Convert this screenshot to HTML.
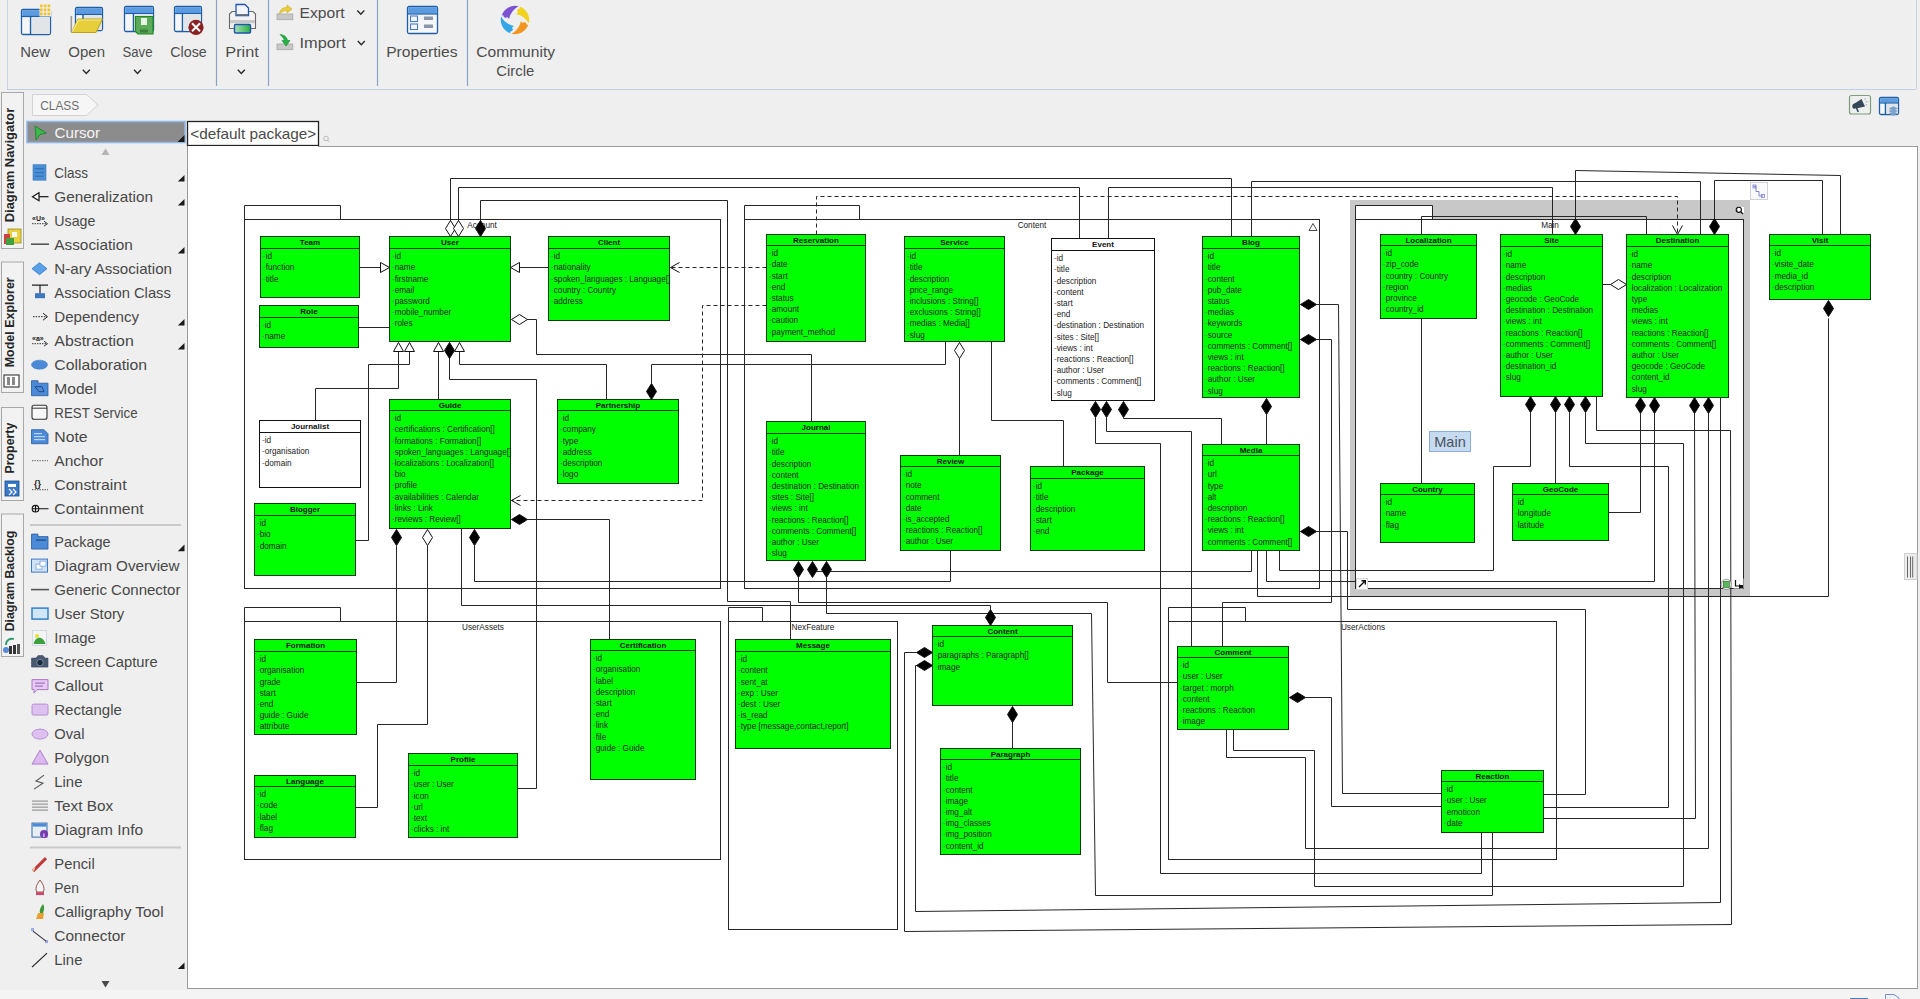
<!DOCTYPE html>
<html><head><meta charset="utf-8">
<style>
html,body{margin:0;padding:0;width:1920px;height:999px;overflow:hidden;background:#efefef;}
svg{display:block;position:absolute;left:0;top:0;}
svg text{font-family:"Liberation Sans",sans-serif;}
</style></head><body>
<svg width="1920" height="999" viewBox="0 0 1920 999">
<rect x="0" y="0" width="1920" height="999" fill="#efefef"/>
<line x1="7.5" y1="0" x2="7.5" y2="89" stroke="#c5d3e2"/>
<line x1="7" y1="89.5" x2="1916" y2="89.5" stroke="#b9d0e8"/>
<line x1="216.5" y1="0" x2="216.5" y2="86" stroke="#8aa4c6" stroke-width="1.2"/>
<line x1="268.5" y1="0" x2="268.5" y2="86" stroke="#8aa4c6" stroke-width="1.2"/>
<line x1="377.5" y1="0" x2="377.5" y2="86" stroke="#8aa4c6" stroke-width="1.2"/>
<line x1="467.5" y1="0" x2="467.5" y2="86" stroke="#8aa4c6" stroke-width="1.2"/>
<text x="20.3" y="56.7" textLength="29.7" font-size="14.5" fill="#4d4d4d" lengthAdjust="spacingAndGlyphs">New</text>
<text x="68.3" y="56.7" textLength="36.7" font-size="14.5" fill="#4d4d4d" lengthAdjust="spacingAndGlyphs">Open</text>
<text x="122.5" y="56.7" textLength="30" font-size="14.5" fill="#4d4d4d" lengthAdjust="spacingAndGlyphs">Save</text>
<text x="170.3" y="56.7" textLength="36.4" font-size="14.5" fill="#4d4d4d" lengthAdjust="spacingAndGlyphs">Close</text>
<text x="225.3" y="56.7" textLength="33.4" font-size="14.5" fill="#4d4d4d" lengthAdjust="spacingAndGlyphs">Print</text>
<text x="299.5" y="17.5" textLength="45.2" font-size="14.5" fill="#4d4d4d" lengthAdjust="spacingAndGlyphs">Export</text>
<text x="299.5" y="47.8" textLength="46.3" font-size="14.5" fill="#4d4d4d" lengthAdjust="spacingAndGlyphs">Import</text>
<text x="386.2" y="56.7" textLength="71.3" font-size="14.5" fill="#4d4d4d" lengthAdjust="spacingAndGlyphs">Properties</text>
<text x="476.3" y="56.7" textLength="78.7" font-size="14.5" fill="#4d4d4d" lengthAdjust="spacingAndGlyphs">Community</text>
<text x="496.3" y="75.8" textLength="37.9" font-size="14.5" fill="#4d4d4d" lengthAdjust="spacingAndGlyphs">Circle</text>
<path d="M82.8 69.7L86.3 73.5L89.8 69.7" fill="none" stroke="#2a2a2a" stroke-width="1.4"/>
<path d="M134.0 69.7L137.5 73.5L141.0 69.7" fill="none" stroke="#2a2a2a" stroke-width="1.4"/>
<path d="M237.8 69.7L241.3 73.5L244.8 69.7" fill="none" stroke="#2a2a2a" stroke-width="1.4"/>
<path d="M357.3 10.5L360.8 14.3L364.3 10.5" fill="none" stroke="#2a2a2a" stroke-width="1.4"/>
<path d="M357.8 41L361.3 44.8L364.8 41" fill="none" stroke="#2a2a2a" stroke-width="1.4"/>
<rect x="21.5" y="9.5" width="29" height="25" rx="1.5" fill="#f4f6f8" stroke="#1f5fa8" stroke-width="1.3"/><rect x="22.2" y="10.2" width="27.6" height="6" fill="#5b9be0"/><line x1="21" y1="16.5" x2="51" y2="16.5" stroke="#1f5fa8" stroke-width="1.2"/><line x1="30.6" y1="16.5" x2="30.6" y2="34" stroke="#1f5fa8" stroke-width="1.5"/><rect x="31.6" y="17.5" width="17.9" height="16.5" fill="#e2e5e8"/>
<rect x="39.5" y="4" width="11.5" height="12.5" fill="#efefef"/>
<rect x="40.0" y="4.5" width="2.6" height="2.8" fill="#f2c230"/>
<rect x="43.8" y="4.5" width="2.6" height="2.8" fill="#f2c230"/>
<rect x="47.6" y="4.5" width="2.6" height="2.8" fill="#f2c230"/>
<rect x="40.0" y="8.5" width="2.6" height="2.8" fill="#f2c230"/>
<rect x="43.8" y="8.5" width="2.6" height="2.8" fill="#f2c230"/>
<rect x="47.6" y="8.5" width="2.6" height="2.8" fill="#f2c230"/>
<rect x="40.0" y="12.5" width="2.6" height="2.8" fill="#f2c230"/>
<rect x="43.8" y="12.5" width="2.6" height="2.8" fill="#f2c230"/>
<rect x="47.6" y="12.5" width="2.6" height="2.8" fill="#f2c230"/>
<rect x="75.5" y="7.5" width="27" height="23" rx="1.5" fill="#f4f6f8" stroke="#1f5fa8" stroke-width="1.3"/><rect x="76.2" y="8.2" width="25.6" height="6" fill="#5b9be0"/><line x1="75" y1="14.5" x2="103" y2="14.5" stroke="#1f5fa8" stroke-width="1.2"/><line x1="83" y1="14.5" x2="83" y2="30" stroke="#1f5fa8" stroke-width="1.5"/><rect x="84" y="15.5" width="17.5" height="14.5" fill="#e2e5e8"/>
<path d="M71.5 32.5L78 19H102.5L96 32.5Z" fill="#e6cf3a" stroke="#b9a21a" stroke-width="1"/>
<path d="M72 32L78.5 20H101" fill="none" stroke="#f6ea8a" stroke-width="1.2"/>
<rect x="70.5" y="16" width="1.6" height="16" fill="#9a9a9a"/>
<rect x="124.5" y="6.5" width="29" height="25" rx="1.5" fill="#f4f6f8" stroke="#1f5fa8" stroke-width="1.3"/><rect x="125.2" y="7.2" width="27.6" height="6" fill="#5b9be0"/><line x1="124" y1="13.5" x2="154" y2="13.5" stroke="#1f5fa8" stroke-width="1.2"/><line x1="133.5" y1="13.5" x2="133.5" y2="31" stroke="#1f5fa8" stroke-width="1.5"/><rect x="134.5" y="14.5" width="18.0" height="16.5" fill="#e2e5e8"/>
<path d="M135.5 16.5H153V34H138L135.5 31.5Z" fill="#5bab5b" stroke="#1e8a1e" stroke-width="1.2"/>
<rect x="141" y="18" width="6" height="7" fill="#e8f4e8"/>
<rect x="140" y="29.5" width="8" height="3" fill="#3d7d3d"/>
<rect x="174.5" y="6.5" width="27" height="25" rx="1.5" fill="#f4f6f8" stroke="#1f5fa8" stroke-width="1.3"/><rect x="175.2" y="7.2" width="25.6" height="6" fill="#5b9be0"/><line x1="174" y1="13.5" x2="202" y2="13.5" stroke="#1f5fa8" stroke-width="1.2"/><line x1="182.5" y1="13.5" x2="182.5" y2="31" stroke="#1f5fa8" stroke-width="1.5"/><rect x="183.5" y="14.5" width="17.0" height="16.5" fill="#e2e5e8"/>
<circle cx="196" cy="27.3" r="7.6" fill="#8b2020"/>
<path d="M192 23.3L200 31.3M200 23.3L192 31.3" stroke="#fff" stroke-width="2"/>
<path d="M229.5 28.5V14L232 11.5H253L255.5 14V28.5Z" fill="#f2f2f2" stroke="#6a6a6a" stroke-width="1.1"/>
<rect x="230" y="20" width="25" height="3.2" fill="#c8c8c8"/>
<path d="M236 4.5H245L248.5 8V15.5H236Z" fill="#f4f4ff" stroke="#1f55b0" stroke-width="1.3"/>
<rect x="236.5" y="14" width="11.5" height="1.6" fill="#777"/>
<defs><linearGradient id="gpr" x1="0" x2="1"><stop offset="0" stop-color="#a8e0c0"/><stop offset="1" stop-color="#28b040"/></linearGradient></defs>
<rect x="234.5" y="24.5" width="16" height="8.5" rx="1" fill="url(#gpr)" stroke="#1f55b0" stroke-width="1.4"/>
<rect x="277" y="14" width="15.8" height="5.7" fill="#c8c8c8" stroke="#a8a8a8" stroke-width="0.8"/>
<path d="M279.5 14C280 9 283 7.5 287 7.5V5L292 9L287 13V10.5C284 10.5 281.5 11.5 279.5 14Z" fill="#e8cf3a" stroke="#c9aa20" stroke-width="0.6"/>
<rect x="277" y="44" width="15.8" height="5.7" fill="#c8c8c8" stroke="#a8a8a8" stroke-width="0.8"/>
<path d="M280 34.5C285 35 287 37.5 287.5 40.5H290L286 46L282 40.5H284.5C284 38.5 282.5 37 280 34.5Z" fill="#23b043" stroke="#148a2a" stroke-width="0.6"/>
<rect x="407.5" y="6.5" width="30" height="27" rx="1.5" fill="#f4f6f8" stroke="#1f5fa8" stroke-width="1.3"/><rect x="408.2" y="7.2" width="28.6" height="6.5" fill="#5b9be0"/><line x1="407" y1="14.0" x2="438" y2="14.0" stroke="#1f5fa8" stroke-width="1.2"/>
<rect x="410.5" y="16" width="7" height="5.5" fill="none" stroke="#4a7ac8" stroke-width="1.1"/>
<rect x="410.5" y="24" width="7" height="5.5" fill="none" stroke="#4a7ac8" stroke-width="1.1"/>
<rect x="424" y="16.5" width="9" height="3.5" fill="#8a97a8"/>
<rect x="424" y="24.5" width="9" height="3.5" fill="#8a97a8"/>
<g transform="translate(515,20)"><g fill="#7b52d4"><path d="M-13.2 -4.8A14 14 0 0 1 3.6 -13.8Q-4 -10 -6 -1Q-8 -5 -13.2 -4.8Z"/><circle cx="-9.3" cy="-4.6" r="2.3"/></g><g fill="#f2d21e" transform="rotate(90)"><path d="M-13.2 -4.8A14 14 0 0 1 3.6 -13.8Q-4 -10 -6 -1Q-8 -5 -13.2 -4.8Z"/><circle cx="-9.3" cy="-4.6" r="2.3"/></g><g fill="#f2941e" transform="rotate(180)"><path d="M-13.2 -4.8A14 14 0 0 1 3.6 -13.8Q-4 -10 -6 -1Q-8 -5 -13.2 -4.8Z"/><circle cx="-9.3" cy="-4.6" r="2.3"/></g><g fill="#35a6e6" transform="rotate(270)"><path d="M-13.2 -4.8A14 14 0 0 1 3.6 -13.8Q-4 -10 -6 -1Q-8 -5 -13.2 -4.8Z"/><circle cx="-9.3" cy="-4.6" r="2.3"/></g></g>
<path d="M32.5 94.5H86.5L98 105L86.5 115.5H32.5Z" fill="#f6f6f6" stroke="#d2d2d2"/>
<text x="40.3" y="110" font-size="13" textLength="38.9" lengthAdjust="spacingAndGlyphs" fill="#6e6e6e">CLASS</text>
<rect x="1849.5" y="95.5" width="21" height="18.5" rx="2" fill="#eef0ee" stroke="#7e9e7e" stroke-width="1.2"/>
<path d="M1853 104.5L1861.5 99L1865 106.5L1856 108.5Z" fill="#34485a"/><ellipse cx="1854.3" cy="106.2" rx="2" ry="2.6" fill="#34485a"/><path d="M1856.5 108L1858.3 112" stroke="#34485a" stroke-width="1.6"/>
<path d="M1864.5 99.5L1866 98.5M1865.5 102L1867.5 101.5M1865.5 104.5L1867 105" stroke="#7a8a9a" stroke-width="0.7"/>
<rect x="1879.5" y="97.5" width="19" height="17" rx="1.5" fill="#f4f6f8" stroke="#1f5fa8" stroke-width="1.3"/><rect x="1880.2" y="98.2" width="17.6" height="4.5" fill="#5b9be0"/><line x1="1879" y1="103.0" x2="1899" y2="103.0" stroke="#1f5fa8" stroke-width="1.2"/><line x1="1885.5" y1="103.0" x2="1885.5" y2="114" stroke="#1f5fa8" stroke-width="1.5"/><rect x="1886.5" y="104.0" width="11.0" height="10.0" fill="#e2e5e8"/>
<path d="M1889 108.5L1893.5 106.5L1897.5 108.5L1893 110.5Z M1889 111L1893.5 109L1897.5 111L1893 113Z M1889 113.5L1893.5 111.5L1897.5 113.5L1893 115.5Z" fill="#6aa0d8" stroke="#9aa8b8" stroke-width="0.5"/>
<line x1="1916.5" y1="0" x2="1916.5" y2="89" stroke="#c5d3e2"/>
<rect x="1.5" y="92.5" width="22" height="156.0" fill="#f2f2f2" stroke="#a8a8a8"/>
<text transform="translate(13.6,222.2) rotate(-90)" font-size="12.5" font-weight="bold" fill="#262626" textLength="114.4" lengthAdjust="spacingAndGlyphs">Diagram Navigator</text>
<rect x="1.5" y="262" width="22" height="130.5" fill="#f2f2f2" stroke="#a8a8a8"/>
<text transform="translate(13.6,367.3) rotate(-90)" font-size="12.5" font-weight="bold" fill="#262626" textLength="90" lengthAdjust="spacingAndGlyphs">Model Explorer</text>
<rect x="1.5" y="407.5" width="22" height="93.0" fill="#f2f2f2" stroke="#a8a8a8"/>
<text transform="translate(13.6,473.6) rotate(-90)" font-size="12.5" font-weight="bold" fill="#262626" textLength="51" lengthAdjust="spacingAndGlyphs">Property</text>
<rect x="1.5" y="514" width="22" height="142.5" fill="#f2f2f2" stroke="#a8a8a8"/>
<text transform="translate(13.6,631.3) rotate(-90)" font-size="12.5" font-weight="bold" fill="#262626" textLength="100.6" lengthAdjust="spacingAndGlyphs">Diagram Backlog</text>
<rect x="8" y="229" width="13" height="14" fill="#e8d040" stroke="#9a8a20" stroke-width="0.8"/><rect x="4" y="234" width="6" height="10" fill="#d04040"/><rect x="6" y="238" width="8" height="7" fill="#40a040"/><rect x="12" y="232" width="5" height="5" fill="#fff"/>
<rect x="4" y="375" width="15" height="12" fill="#fff" stroke="#444" stroke-width="1.2"/><rect x="7" y="377" width="3" height="8" fill="#888"/><rect x="12" y="377" width="3" height="8" fill="#888"/>
<rect x="5" y="481" width="14" height="15" fill="#3a78c8" stroke="#1a4a8a" stroke-width="0.8"/><rect x="8" y="484" width="8" height="3" fill="#fff"/><path d="M9 489L12 492L9 495M13 489L16 492L13 495" stroke="#fff" fill="none" stroke-width="1.2"/>
<path d="M6 645C6 640 10 638 14 639" fill="none" stroke="#2a9a6a" stroke-width="1.8"/><rect x="9" y="646" width="3" height="8" fill="#333"/><rect x="13" y="645" width="3" height="9" fill="#333"/><rect x="17" y="644" width="3" height="10" fill="#555"/><circle cx="6" cy="650" r="3" fill="#5a8ad8"/>
<rect x="27" y="121.5" width="158" height="21" fill="#8c8c8c" stroke="#8fb8e4" stroke-width="1.6"/>
<path d="M35 126L46.5 133L40 134.5L36 140Z" fill="#3ab84a" stroke="#1e7a2a" stroke-width="0.8"/>
<text x="54.5" y="138.3" font-size="14.5" textLength="45.6" lengthAdjust="spacingAndGlyphs" fill="#f4f4f4">Cursor</text>
<path d="M184.5 135V142H177.5Z" fill="#1a1a1a"/>
<path d="M101.5 155H109.5L105.5 148.5Z" fill="#b4b4b4"/>
<path d="M101.5 981H109.5L105.5 987.5Z" fill="#4a4a4a"/>
<text x="54.3" y="177.9" textLength="33.7" font-size="14.5" fill="#484848" lengthAdjust="spacingAndGlyphs">Class</text>
<text x="54.3" y="201.9" textLength="98.6" font-size="14.5" fill="#484848" lengthAdjust="spacingAndGlyphs">Generalization</text>
<text x="54.3" y="225.9" textLength="41.1" font-size="14.5" fill="#484848" lengthAdjust="spacingAndGlyphs">Usage</text>
<text x="54.3" y="249.9" textLength="78.4" font-size="14.5" fill="#484848" lengthAdjust="spacingAndGlyphs">Association</text>
<text x="54.3" y="273.9" textLength="117.7" font-size="14.5" fill="#484848" lengthAdjust="spacingAndGlyphs">N-ary Association</text>
<text x="54.3" y="297.9" textLength="116.6" font-size="14.5" fill="#484848" lengthAdjust="spacingAndGlyphs">Association Class</text>
<text x="54.3" y="321.9" textLength="84.7" font-size="14.5" fill="#484848" lengthAdjust="spacingAndGlyphs">Dependency</text>
<text x="54.3" y="345.9" textLength="79.5" font-size="14.5" fill="#484848" lengthAdjust="spacingAndGlyphs">Abstraction</text>
<text x="54.3" y="369.9" textLength="92.8" font-size="14.5" fill="#484848" lengthAdjust="spacingAndGlyphs">Collaboration</text>
<text x="54.3" y="393.9" textLength="42.4" font-size="14.5" fill="#484848" lengthAdjust="spacingAndGlyphs">Model</text>
<text x="54.3" y="417.9" textLength="83.3" font-size="14.5" fill="#484848" lengthAdjust="spacingAndGlyphs">REST Service</text>
<text x="54.3" y="441.9" textLength="33.3" font-size="14.5" fill="#484848" lengthAdjust="spacingAndGlyphs">Note</text>
<text x="54.3" y="465.9" textLength="49.1" font-size="14.5" fill="#484848" lengthAdjust="spacingAndGlyphs">Anchor</text>
<text x="54.3" y="489.9" textLength="72.3" font-size="14.5" fill="#484848" lengthAdjust="spacingAndGlyphs">Constraint</text>
<text x="54.3" y="513.9" textLength="89.4" font-size="14.5" fill="#484848" lengthAdjust="spacingAndGlyphs">Containment</text>
<text x="54.3" y="547.3" textLength="56.3" font-size="14.5" fill="#484848" lengthAdjust="spacingAndGlyphs">Package</text>
<text x="54.3" y="571.3" textLength="125.2" font-size="14.5" fill="#484848" lengthAdjust="spacingAndGlyphs">Diagram Overview</text>
<text x="54.3" y="595.3" textLength="126.1" font-size="14.5" fill="#484848" lengthAdjust="spacingAndGlyphs">Generic Connector</text>
<text x="54.3" y="619.3" textLength="70" font-size="14.5" fill="#484848" lengthAdjust="spacingAndGlyphs">User Story</text>
<text x="54.3" y="643.3" textLength="41.5" font-size="14.5" fill="#484848" lengthAdjust="spacingAndGlyphs">Image</text>
<text x="54.3" y="667.3" textLength="103.3" font-size="14.5" fill="#484848" lengthAdjust="spacingAndGlyphs">Screen Capture</text>
<text x="54.3" y="691.3" textLength="48.7" font-size="14.5" fill="#484848" lengthAdjust="spacingAndGlyphs">Callout</text>
<text x="54.3" y="715.3" textLength="67.5" font-size="14.5" fill="#484848" lengthAdjust="spacingAndGlyphs">Rectangle</text>
<text x="54.3" y="739.3" textLength="30.2" font-size="14.5" fill="#484848" lengthAdjust="spacingAndGlyphs">Oval</text>
<text x="54.3" y="763.3" textLength="54.9" font-size="14.5" fill="#484848" lengthAdjust="spacingAndGlyphs">Polygon</text>
<text x="54.3" y="787.3" textLength="28.1" font-size="14.5" fill="#484848" lengthAdjust="spacingAndGlyphs">Line</text>
<text x="54.3" y="811.3" textLength="58.8" font-size="14.5" fill="#484848" lengthAdjust="spacingAndGlyphs">Text Box</text>
<text x="54.3" y="835.3" textLength="88.8" font-size="14.5" fill="#484848" lengthAdjust="spacingAndGlyphs">Diagram Info</text>
<text x="54.3" y="869.3" textLength="40.4" font-size="14.5" fill="#484848" lengthAdjust="spacingAndGlyphs">Pencil</text>
<text x="54.3" y="893.3" textLength="24.7" font-size="14.5" fill="#484848" lengthAdjust="spacingAndGlyphs">Pen</text>
<text x="54.3" y="917.3" textLength="109.3" font-size="14.5" fill="#484848" lengthAdjust="spacingAndGlyphs">Calligraphy Tool</text>
<text x="54.3" y="941.3" textLength="71.1" font-size="14.5" fill="#484848" lengthAdjust="spacingAndGlyphs">Connector</text>
<text x="54.3" y="965.3" textLength="28.1" font-size="14.5" fill="#484848" lengthAdjust="spacingAndGlyphs">Line</text>
<line x1="30" y1="525" x2="181" y2="525" stroke="#c9c9c9" stroke-width="2"/>
<line x1="30" y1="847.5" x2="181" y2="847.5" stroke="#c9c9c9" stroke-width="2"/>
<path d="M184.5 175.0V181.60000000000002H177.8Z" fill="#1a1a1a"/>
<path d="M184.5 199.0V205.60000000000002H177.8Z" fill="#1a1a1a"/>
<path d="M184.5 247.0V253.60000000000002H177.8Z" fill="#1a1a1a"/>
<path d="M184.5 319.0V325.6H177.8Z" fill="#1a1a1a"/>
<path d="M184.5 343.0V349.6H177.8Z" fill="#1a1a1a"/>
<path d="M184.5 544.6V551.1999999999999H177.8Z" fill="#1a1a1a"/>
<path d="M184.5 962.5V969.0999999999999H177.8Z" fill="#1a1a1a"/>
<rect x="33" y="164.7" width="13" height="15.5" fill="#4a8fd6" stroke="#3a78c0" stroke-width="0.6"/><path d="M35 168.7H44M35 172.7H44M35 176.2H44" stroke="#2f6cb0" stroke-width="1"/>
<path d="M39 192.7L32.5 196.7L39 200.7Z" fill="#fff" stroke="#111" stroke-width="1.2"/><line x1="39" y1="196.7" x2="48.5" y2="196.7" stroke="#111" stroke-width="1.2"/>
<text x="32" y="221.2" font-size="7" font-weight="bold" fill="#222">«U»</text><path d="M32 223.7H47" stroke="#222" stroke-dasharray="1.5,1" stroke-width="0.9"/><path d="M44 221.2L47.5 223.7L44 226.2" fill="none" stroke="#222" stroke-width="0.9"/>
<line x1="31" y1="244.2" x2="49" y2="244.2" stroke="#555" stroke-width="1.6"/>
<path d="M39.5 262.7L47 268.7L39.5 274.7L32 268.7Z" fill="#58a0e8" stroke="#3a7ac8" stroke-width="0.8"/>
<path d="M32 285.2H48M40 285.2V293.7" stroke="#222" stroke-width="1.2" stroke-dasharray="none"/><rect x="35" y="293.2" width="10" height="5" fill="#3a78c0"/>
<path d="M33 316.7H47" stroke="#222" stroke-dasharray="1.5,1.2" stroke-width="1"/><path d="M43 313.2L47.5 316.7L43 320.2" fill="none" stroke="#222" stroke-width="1"/>
<text x="32" y="341.2" font-size="7" font-weight="bold" fill="#222">«a»</text><path d="M32 343.7H47" stroke="#222" stroke-dasharray="1.5,1" stroke-width="0.9"/><path d="M44 341.2L47.5 343.7L44 346.2" fill="none" stroke="#222" stroke-width="0.9"/>
<ellipse cx="39.5" cy="364.7" rx="8" ry="4.5" fill="#4a8ad8" stroke="#3a78c0" stroke-dasharray="1.5,0.8" stroke-width="0.8"/>
<path d="M31.5 380.7H38V383.2H48V395.7H31.5Z" fill="#4a8ad8" stroke="#2a5a9a" stroke-width="0.8"/><path d="M35 386.7H42L44 391.7H39Z" fill="none" stroke="#1a3a6a" stroke-width="0.8"/>
<rect x="32" y="405.2" width="15" height="14" rx="2" fill="#f8f8f8" stroke="#333" stroke-width="1.1"/><line x1="32" y1="408.2" x2="47" y2="408.2" stroke="#333"/>
<path d="M31.5 429.7H44L48 433.7V443.7H31.5Z" fill="#4a8ad8" stroke="#2a5a9a" stroke-width="0.8"/><path d="M34 433.7H42M34 436.7H45M34 439.7H45" stroke="#e8f0f8" stroke-width="0.9"/>
<path d="M32 460.7H48" stroke="#444" stroke-dasharray="1.3,1.2" stroke-width="0.9"/>
<text x="34" y="486.7" font-size="9" font-weight="bold" fill="#222">{}</text><path d="M32 489.7H48" stroke="#333" stroke-dasharray="1.3,1.2" stroke-width="0.9"/>
<circle cx="35.5" cy="508.7" r="3.3" fill="none" stroke="#111" stroke-width="1.1"/><path d="M32.2 508.7H48.5M35.5 505.4V512.0" stroke="#111" stroke-width="1.1"/>
<path d="M31.5 534.1H38V536.6H48V549.1H31.5Z" fill="#4a8ad8" stroke="#2a5a9a" stroke-width="0.8"/><line x1="36" y1="540.1" x2="46" y2="540.1" stroke="#1a3a6a" stroke-width="1"/>
<rect x="31.5" y="559.1" width="16" height="13" fill="#cfe2f6" stroke="#3a7ac8" stroke-width="1"/><rect x="36" y="564.1" width="6" height="5" fill="#fff" stroke="#6a9ad8" stroke-width="0.7"/><rect x="40" y="561.1" width="6" height="5" fill="#fff" stroke="#6a9ad8" stroke-width="0.7"/>
<line x1="31" y1="589.6" x2="49" y2="589.6" stroke="#555" stroke-width="1.6"/>
<rect x="32" y="608.1" width="16" height="11" fill="#cfe6f8" stroke="#2a7ac8" stroke-width="1.4"/>
<rect x="32.5" y="630.6" width="14" height="15" fill="#f4f4f4" stroke="#c8d4e0" stroke-width="0.8"/><path d="M33.5 644.1C35 636.1 43 635.1 45.5 644.1Z" fill="#3aa03a"/><circle cx="37" cy="636.1" r="2" fill="#e8e030"/>
<path d="M31.5 658.1H36L38 655.6H43L45 658.1H48V667.1H31.5Z" fill="#4a5a72" stroke="#3a4a60" stroke-width="0.6"/><circle cx="40" cy="662.6" r="3.2" fill="#1a2a3a" stroke="#8a9ab0" stroke-width="0.8"/>
<path d="M32 679.6H48V689.6H37L34 693.1V689.6H32Z" fill="#e8c8f4" stroke="#a070c0" stroke-width="0.9"/><path d="M35 683.1H45M35 686.1H43" stroke="#8a58a8" stroke-width="0.9"/>
<rect x="32" y="704.1" width="16" height="11" rx="1.5" fill="#dcc0f0" stroke="#b088d0" stroke-width="0.9"/>
<ellipse cx="40" cy="734.1" rx="8" ry="5" fill="#dcc0f0" stroke="#b088d0" stroke-width="0.9"/>
<path d="M40 750.1L48 764.1H32Z" fill="#dcb8f0" stroke="#a878c8" stroke-width="0.9"/>
<path d="M44 775.1L36 781.1L43 783.1L34 789.1" fill="none" stroke="#555" stroke-width="1.1"/>
<path d="M32 801.1H48M32 804.1H48M32 807.1H48M32 810.1H48" stroke="#777" stroke-width="0.9"/>
<rect x="32" y="823.1" width="15" height="14" fill="#e8eef6" stroke="#3a6aa8" stroke-width="1"/><rect x="32.5" y="823.6" width="14" height="3" fill="#4a8ad8"/><circle cx="44" cy="834.1" r="4" fill="#7a3ab0"/><text x="43" y="836.6" font-size="6" font-weight="bold" fill="#fff">i</text>
<path d="M33 871.1L46 858.1" stroke="#c03a3a" stroke-width="3"/><path d="M33 871.1L34.5 867.1" stroke="#e8c0a0" stroke-width="2"/>
<path d="M40 880.1C36 885.1 35 889.1 37 892.1H43C45 889.1 44 885.1 40 880.1Z" fill="#f4f4f4" stroke="#8a3a3a" stroke-width="0.9"/><rect x="36" y="892.1" width="8" height="3" fill="#c84a6a"/>
<path d="M43 904.1C40 908.1 39 911.1 40 913.1L43 913.1C44 910.1 45 907.1 43 904.1Z" fill="#3a9a3a"/><path d="M36 919.1L38 913.1H44L43 919.1Z" fill="#e8a030"/>
<rect x="31" y="928.1" width="3" height="3" fill="#9aa8e8"/><rect x="45" y="940.1" width="3" height="3" fill="#9aa8e8"/><path d="M33 931.1L46 941.1" stroke="#334" stroke-width="1.1"/>
<path d="M32 967.1L47 953.1" stroke="#222" stroke-width="1.2"/>
<rect x="187.5" y="121.5" width="131" height="24" fill="#fff" stroke="#222" stroke-width="1.3"/>
<text x="190.3" y="139.2" font-size="14.5" textLength="126" lengthAdjust="spacingAndGlyphs" fill="#4a4a4a">&lt;default package&gt;</text>
<circle cx="326" cy="138.5" r="2.3" fill="none" stroke="#aaa" stroke-width="0.8"/><path d="M327.6 140.1L329.5 142" stroke="#aaa" stroke-width="0.8"/>
<rect x="0" y="990" width="1920" height="9" fill="#f4f4f4"/>
<rect x="1850" y="998" width="18" height="1" fill="#4a80c8"/>
<path d="M1885.5 999V994.5H1894L1899 998V999" fill="#eef2fa" stroke="#7a8ad0"/>
<rect x="187.5" y="146.5" width="1730" height="842" fill="#fff" stroke="#9a9a9a"/>
<line x1="188" y1="146.5" x2="318" y2="146.5" stroke="#fff"/>
<rect x="1904.5" y="553.5" width="12.5" height="26" fill="#ececec" stroke="#d0d0d0"/>
<path d="M1907.5 556.5V577.5M1910.5 556.5V577.5M1912.7 556.5V577.5" stroke="#5a5a5a" stroke-width="0.9"/>
<path d="M244.5 219.5V205.5H340.5V219.5" fill="none" stroke="#262626"/>
<rect x="244.5" y="219.5" width="476" height="369" fill="none" stroke="#262626"/>
<text x="482" y="228" font-size="8.2" text-anchor="middle" fill="#222">Account</text>
<path d="M744.5 219.5V205.5H859.5V219.5" fill="none" stroke="#262626"/>
<rect x="744.5" y="219.5" width="575" height="369" fill="none" stroke="#262626"/>
<text x="1032" y="228" font-size="8.2" text-anchor="middle" fill="#222">Content</text>
<path d="M244.5 621.5V607.5H340.5V621.5" fill="none" stroke="#262626"/>
<rect x="244.5" y="621.5" width="476" height="238" fill="none" stroke="#262626"/>
<text x="483" y="630" font-size="8.2" text-anchor="middle" fill="#222">UserAssets</text>
<path d="M728.5 621.5V607.5H762.5V621.5" fill="none" stroke="#262626"/>
<rect x="728.5" y="621.5" width="169" height="308" fill="none" stroke="#262626"/>
<text x="813" y="630" font-size="8.2" text-anchor="middle" fill="#222">NexFeature</text>
<path d="M1168.5 621.5V607.5H1245.5V621.5" fill="none" stroke="#262626"/>
<rect x="1168.5" y="621.5" width="388" height="238" fill="none" stroke="#262626"/>
<text x="1363" y="630" font-size="8.2" text-anchor="middle" fill="#222">UserActions</text>
<path d="M1350 200H1750V596H1350Z M1355 219H1743V588H1355Z" fill="#c8c8c8" fill-rule="evenodd"/>
<rect x="1355" y="205" width="77" height="14" fill="#fff"/>
<path d="M1355.5 219.5V205.5H1432.5V219.5" fill="none" stroke="#262626"/>
<rect x="1355.5" y="219.5" width="388" height="369" fill="none" stroke="#262626"/>
<text x="1550" y="228" font-size="8.2" text-anchor="middle" fill="#222">Main</text>
<path d="M1309 230.5L1313 223.5L1317 230.5Z" fill="none" stroke="#333" stroke-width="0.9"/>
<polyline points="450.5,221.5 450.5,178.5 1231.5,178.5 1231.5,236.5" fill="none" stroke="#262626"/>
<polyline points="458.5,221.5 458.5,187.5 1079.5,187.5 1079.5,238.5" fill="none" stroke="#262626"/>
<polyline points="480.5,221.5 480.5,200.5 727.5,200.5 727.5,601.5 790.5,601.5 790.5,639.5" fill="none" stroke="#262626"/>
<polyline points="359.5,267.5 381.5,267.5" fill="none" stroke="#262626"/>
<polyline points="358.5,327.5 389.5,327.5" fill="none" stroke="#262626"/>
<polyline points="548.5,267.5 519.5,267.5" fill="none" stroke="#262626"/>
<polyline points="766.5,267.5 670.5,267.5" fill="none" stroke="#262626" stroke-dasharray="4,3"/>
<polyline points="526.5,319.5 536.5,319.5 536.5,354.5 811.5,354.5 811.5,421.5" fill="none" stroke="#262626"/>
<polyline points="398.5,350.5 398.5,388.5 315.5,388.5 315.5,420.5" fill="none" stroke="#262626"/>
<polyline points="409.5,350.5 409.5,364.5 368.5,364.5 368.5,540.5 355.5,540.5" fill="none" stroke="#262626"/>
<polyline points="438.5,350.5 438.5,399.5" fill="none" stroke="#262626"/>
<polyline points="449.5,357.5 449.5,379.5 536.5,379.5 536.5,788.5 517.5,788.5" fill="none" stroke="#262626"/>
<polyline points="459.5,350.5 459.5,364.5 606.5,364.5 606.5,399.5" fill="none" stroke="#262626"/>
<polyline points="651.5,383.5 651.5,364.5 945.5,364.5 945.5,341.5" fill="none" stroke="#262626"/>
<polyline points="766.5,305.5 702.5,305.5 702.5,500.5 511.5,500.5" fill="none" stroke="#262626" stroke-dasharray="4,3"/>
<polyline points="526.5,519.5 609.5,519.5 609.5,639.5" fill="none" stroke="#262626"/>
<polyline points="396.5,545.5 396.5,682.5 356.5,682.5" fill="none" stroke="#262626"/>
<polyline points="427.5,545.5 427.5,724.5 377.5,724.5 377.5,807.5 355.5,807.5" fill="none" stroke="#262626"/>
<polyline points="461.5,528.5 461.5,605.5 990.5,605.5 990.5,609.5" fill="none" stroke="#262626"/>
<polyline points="474.5,545.5 474.5,581.5 950.5,581.5 950.5,550.5" fill="none" stroke="#262626"/>
<polyline points="816.5,234.5 816.5,196.5 1677.5,196.5 1677.5,234.5" fill="none" stroke="#262626" stroke-dasharray="4,3"/>
<polyline points="959.5,358.5 959.5,455.5" fill="none" stroke="#262626"/>
<polyline points="991.5,341.5 991.5,420.5 1063.5,420.5 1063.5,466.5" fill="none" stroke="#262626"/>
<polyline points="1108.5,238.5 1108.5,187.5 1552.5,187.5 1552.5,234.5" fill="none" stroke="#262626"/>
<polyline points="1095.5,417.5 1095.5,443.5 1160.5,443.5 1160.5,873.5 1481.5,873.5 1481.5,832.5" fill="none" stroke="#262626"/>
<polyline points="1106.5,417.5 1106.5,431.5 1191.5,431.5 1191.5,646.5" fill="none" stroke="#262626"/>
<polyline points="1123.5,417.5 1123.5,418.5 1221.5,418.5 1221.5,444.5" fill="none" stroke="#262626"/>
<polyline points="798.5,577.5 798.5,602.5 1107.5,602.5 1107.5,682.5 1177.5,682.5" fill="none" stroke="#262626"/>
<polyline points="812.5,571.5 1251.5,571.5 1251.5,550.5" fill="none" stroke="#262626"/>
<polyline points="826.5,577.5 826.5,613.5 1091.5,613.5 1095.5,895.5 1492.5,895.5 1492.5,832.5" fill="none" stroke="#262626"/>
<polyline points="1251.5,236.5 1251.5,181.5 1700.5,181.5 1700.5,234.5" fill="none" stroke="#262626"/>
<polyline points="1316.5,304.5 1338.5,304.5 1342.5,793.5 1441.5,793.5" fill="none" stroke="#262626"/>
<polyline points="1316.5,339.5 1331.5,339.5 1331.5,602.5 1222.5,602.5 1222.5,646.5" fill="none" stroke="#262626"/>
<polyline points="1266.5,414.5 1266.5,444.5" fill="none" stroke="#262626"/>
<polyline points="1316.5,531.5 1347.5,531.5 1347.5,609.5 1585.5,609.5 1585.5,794.5 1543.5,794.5" fill="none" stroke="#262626"/>
<polyline points="1257.5,550.5 1257.5,596.5 1828.5,596.5 1828.5,318.5" fill="none" stroke="#262626"/>
<polyline points="1266.5,550.5 1266.5,581.5 1654.5,581.5 1654.5,413.5" fill="none" stroke="#262626"/>
<polyline points="1279.5,550.5 1279.5,570.5 1493.5,570.5 1493.5,466.5 1530.5,466.5 1530.5,412.5" fill="none" stroke="#262626"/>
<polyline points="1421.5,234.5 1421.5,216.5 1646.5,216.5 1646.5,234.5" fill="none" stroke="#262626"/>
<polyline points="1421.5,318.5 1421.5,483.5" fill="none" stroke="#262626"/>
<polyline points="1555.5,412.5 1555.5,483.5" fill="none" stroke="#262626"/>
<polyline points="1569.5,412.5 1569.5,466.5 1668.5,466.5 1668.5,807.5 1543.5,807.5" fill="none" stroke="#262626"/>
<polyline points="1585.5,412.5 1585.5,443.5 1683.5,443.5 1683.5,886.5 1314.5,886.5 1314.5,750.5 1233.5,750.5 1233.5,729.5" fill="none" stroke="#262626"/>
<polyline points="1596.5,396.5 1596.5,430.5 1730.5,430.5 1731.5,924.5 904.5,931.5 904.5,652.5 916.5,652.5" fill="none" stroke="#262626"/>
<polyline points="1640.5,413.5 1640.5,512.5 1608.5,512.5" fill="none" stroke="#262626"/>
<polyline points="1694.5,413.5 1695.5,818.5 1543.5,818.5" fill="none" stroke="#262626"/>
<polyline points="1708.5,413.5 1708.5,848.5 1305.5,848.5 1305.5,757.5 1226.5,757.5 1226.5,729.5" fill="none" stroke="#262626"/>
<polyline points="1720.5,397.5 1720.5,902.5 915.5,911.5 915.5,665.5 916.5,665.5" fill="none" stroke="#262626"/>
<polyline points="1602.5,284.5 1610.5,284.5" fill="none" stroke="#262626"/>
<polyline points="1575.5,219.5 1575.5,170.5 1840.5,175.5 1840.5,234.5" fill="none" stroke="#262626"/>
<polyline points="1714.5,219.5 1714.5,180.5 1822.5,180.5 1822.5,234.5" fill="none" stroke="#262626"/>
<polyline points="1012.5,721.5 1012.5,748.5" fill="none" stroke="#262626"/>
<polyline points="1305.5,697.5 1331.5,697.5 1331.5,806.5 1441.5,806.5" fill="none" stroke="#262626"/>
<rect x="260.5" y="236.5" width="99" height="61" fill="#00ff00" stroke="#0b3a0b"/>
<line x1="260" y1="248.5" x2="360" y2="248.5" stroke="#0b3a0b"/>
<text x="310.0" y="245.2" font-size="8" font-weight="bold" text-anchor="middle" fill="#111">Team</text>
<text x="263" y="259.1" font-size="8.2" fill="#222"><tspan fill="#777">-</tspan>id</text>
<text x="263" y="270.3" font-size="8.2" fill="#222"><tspan fill="#777">-</tspan>function</text>
<text x="263" y="281.5" font-size="8.2" fill="#222"><tspan fill="#777">-</tspan>title</text>
<rect x="259.5" y="305.5" width="99" height="42" fill="#00ff00" stroke="#0b3a0b"/>
<line x1="259" y1="317.5" x2="359" y2="317.5" stroke="#0b3a0b"/>
<text x="309.0" y="314.2" font-size="8" font-weight="bold" text-anchor="middle" fill="#111">Role</text>
<text x="262" y="328.1" font-size="8.2" fill="#222"><tspan fill="#777">-</tspan>id</text>
<text x="262" y="339.3" font-size="8.2" fill="#222"><tspan fill="#777">-</tspan>name</text>
<rect x="389.5" y="236.5" width="121" height="105" fill="#00ff00" stroke="#0b3a0b"/>
<line x1="389" y1="248.5" x2="511" y2="248.5" stroke="#0b3a0b"/>
<text x="450.0" y="245.2" font-size="8" font-weight="bold" text-anchor="middle" fill="#111">User</text>
<text x="392" y="259.1" font-size="8.2" fill="#222"><tspan fill="#777">-</tspan>id</text>
<text x="392" y="270.3" font-size="8.2" fill="#222"><tspan fill="#777">-</tspan>name</text>
<text x="392" y="281.5" font-size="8.2" fill="#222"><tspan fill="#777">-</tspan>firstname</text>
<text x="392" y="292.7" font-size="8.2" fill="#222"><tspan fill="#777">-</tspan>email</text>
<text x="392" y="303.9" font-size="8.2" fill="#222"><tspan fill="#777">-</tspan>password</text>
<text x="392" y="315.1" font-size="8.2" fill="#222"><tspan fill="#777">-</tspan>mobile_number</text>
<text x="392" y="326.3" font-size="8.2" fill="#222"><tspan fill="#777">-</tspan>roles</text>
<rect x="548.5" y="236.5" width="121" height="84" fill="#00ff00" stroke="#0b3a0b"/>
<line x1="548" y1="248.5" x2="670" y2="248.5" stroke="#0b3a0b"/>
<text x="609.0" y="245.2" font-size="8" font-weight="bold" text-anchor="middle" fill="#111">Client</text>
<text x="551" y="259.1" font-size="8.2" fill="#222"><tspan fill="#777">-</tspan>id</text>
<text x="551" y="270.3" font-size="8.2" fill="#222"><tspan fill="#777">-</tspan>nationality</text>
<text x="551" y="281.5" font-size="8.2" fill="#222"><tspan fill="#777">-</tspan>spoken_languages : Language[]</text>
<text x="551" y="292.7" font-size="8.2" fill="#222"><tspan fill="#777">-</tspan>country : Country</text>
<text x="551" y="303.9" font-size="8.2" fill="#222"><tspan fill="#777">-</tspan>address</text>
<rect x="259.5" y="420.5" width="101" height="67" fill="#fff" stroke="#111"/>
<line x1="259" y1="432.5" x2="361" y2="432.5" stroke="#111"/>
<text x="310.0" y="429.2" font-size="8" font-weight="bold" text-anchor="middle" fill="#111">Journalist</text>
<text x="262" y="443.1" font-size="8.2" fill="#222"><tspan fill="#777">-</tspan>id</text>
<text x="262" y="454.3" font-size="8.2" fill="#222"><tspan fill="#777">-</tspan>organisation</text>
<text x="262" y="465.5" font-size="8.2" fill="#222"><tspan fill="#777">-</tspan>domain</text>
<rect x="254.5" y="503.5" width="101" height="72" fill="#00ff00" stroke="#0b3a0b"/>
<line x1="254" y1="515.5" x2="356" y2="515.5" stroke="#0b3a0b"/>
<text x="305.0" y="512.2" font-size="8" font-weight="bold" text-anchor="middle" fill="#111">Blogger</text>
<text x="257" y="526.1" font-size="8.2" fill="#222"><tspan fill="#777">-</tspan>id</text>
<text x="257" y="537.3" font-size="8.2" fill="#222"><tspan fill="#777">-</tspan>bio</text>
<text x="257" y="548.5" font-size="8.2" fill="#222"><tspan fill="#777">-</tspan>domain</text>
<rect x="389.5" y="399.5" width="121" height="129" fill="#00ff00" stroke="#0b3a0b"/>
<line x1="389" y1="410.5" x2="511" y2="410.5" stroke="#0b3a0b"/>
<text x="450.0" y="407.7" font-size="8" font-weight="bold" text-anchor="middle" fill="#111">Guide</text>
<text x="392" y="421.1" font-size="8.2" fill="#222"><tspan fill="#777">-</tspan>id</text>
<text x="392" y="432.3" font-size="8.2" fill="#222"><tspan fill="#777">-</tspan>certifications : Certification[]</text>
<text x="392" y="443.5" font-size="8.2" fill="#222"><tspan fill="#777">-</tspan>formations : Formation[]</text>
<text x="392" y="454.7" font-size="8.2" fill="#222"><tspan fill="#777">-</tspan>spoken_languages : Language[]</text>
<text x="392" y="465.9" font-size="8.2" fill="#222"><tspan fill="#777">-</tspan>localizations : Localization[]</text>
<text x="392" y="477.1" font-size="8.2" fill="#222"><tspan fill="#777">-</tspan>bio</text>
<text x="392" y="488.3" font-size="8.2" fill="#222"><tspan fill="#777">-</tspan>profile</text>
<text x="392" y="499.5" font-size="8.2" fill="#222"><tspan fill="#777">-</tspan>availabilities : Calendar</text>
<text x="392" y="510.7" font-size="8.2" fill="#222"><tspan fill="#777">-</tspan>links : Link</text>
<text x="392" y="521.9" font-size="8.2" fill="#222"><tspan fill="#777">-</tspan>reviews : Review[]</text>
<rect x="557.5" y="399.5" width="121" height="84" fill="#00ff00" stroke="#0b3a0b"/>
<line x1="557" y1="410.5" x2="679" y2="410.5" stroke="#0b3a0b"/>
<text x="618.0" y="407.7" font-size="8" font-weight="bold" text-anchor="middle" fill="#111">Partnership</text>
<text x="560" y="421.1" font-size="8.2" fill="#222"><tspan fill="#777">-</tspan>id</text>
<text x="560" y="432.3" font-size="8.2" fill="#222"><tspan fill="#777">-</tspan>company</text>
<text x="560" y="443.5" font-size="8.2" fill="#222"><tspan fill="#777">-</tspan>type</text>
<text x="560" y="454.7" font-size="8.2" fill="#222"><tspan fill="#777">-</tspan>address</text>
<text x="560" y="465.9" font-size="8.2" fill="#222"><tspan fill="#777">-</tspan>description</text>
<text x="560" y="477.1" font-size="8.2" fill="#222"><tspan fill="#777">-</tspan>logo</text>
<rect x="254.5" y="639.5" width="102" height="95" fill="#00ff00" stroke="#0b3a0b"/>
<line x1="254" y1="651.5" x2="357" y2="651.5" stroke="#0b3a0b"/>
<text x="305.5" y="648.2" font-size="8" font-weight="bold" text-anchor="middle" fill="#111">Formation</text>
<text x="257" y="662.1" font-size="8.2" fill="#222"><tspan fill="#777">-</tspan>id</text>
<text x="257" y="673.3" font-size="8.2" fill="#222"><tspan fill="#777">-</tspan>organisation</text>
<text x="257" y="684.5" font-size="8.2" fill="#222"><tspan fill="#777">-</tspan>grade</text>
<text x="257" y="695.7" font-size="8.2" fill="#222"><tspan fill="#777">-</tspan>start</text>
<text x="257" y="706.9" font-size="8.2" fill="#222"><tspan fill="#777">-</tspan>end</text>
<text x="257" y="718.1" font-size="8.2" fill="#222"><tspan fill="#777">-</tspan>guide : Guide</text>
<text x="257" y="729.3" font-size="8.2" fill="#222"><tspan fill="#777">-</tspan>attribute</text>
<rect x="254.5" y="775.5" width="101" height="62" fill="#00ff00" stroke="#0b3a0b"/>
<line x1="254" y1="786.5" x2="356" y2="786.5" stroke="#0b3a0b"/>
<text x="305.0" y="783.7" font-size="8" font-weight="bold" text-anchor="middle" fill="#111">Language</text>
<text x="257" y="797.1" font-size="8.2" fill="#222"><tspan fill="#777">-</tspan>id</text>
<text x="257" y="808.3" font-size="8.2" fill="#222"><tspan fill="#777">-</tspan>code</text>
<text x="257" y="819.5" font-size="8.2" fill="#222"><tspan fill="#777">-</tspan>label</text>
<text x="257" y="830.7" font-size="8.2" fill="#222"><tspan fill="#777">-</tspan>flag</text>
<rect x="408.5" y="753.5" width="109" height="84" fill="#00ff00" stroke="#0b3a0b"/>
<line x1="408" y1="765.5" x2="518" y2="765.5" stroke="#0b3a0b"/>
<text x="463.0" y="762.2" font-size="8" font-weight="bold" text-anchor="middle" fill="#111">Profile</text>
<text x="411" y="776.1" font-size="8.2" fill="#222"><tspan fill="#777">-</tspan>id</text>
<text x="411" y="787.3" font-size="8.2" fill="#222"><tspan fill="#777">-</tspan>user : User</text>
<text x="411" y="798.5" font-size="8.2" fill="#222"><tspan fill="#777">-</tspan>icon</text>
<text x="411" y="809.7" font-size="8.2" fill="#222"><tspan fill="#777">-</tspan>url</text>
<text x="411" y="820.9" font-size="8.2" fill="#222"><tspan fill="#777">-</tspan>text</text>
<text x="411" y="832.1" font-size="8.2" fill="#222"><tspan fill="#777">-</tspan>clicks : int</text>
<rect x="590.5" y="639.5" width="105" height="140" fill="#00ff00" stroke="#0b3a0b"/>
<line x1="590" y1="650.5" x2="696" y2="650.5" stroke="#0b3a0b"/>
<text x="643.0" y="647.7" font-size="8" font-weight="bold" text-anchor="middle" fill="#111">Certification</text>
<text x="593" y="661.1" font-size="8.2" fill="#222"><tspan fill="#777">-</tspan>id</text>
<text x="593" y="672.3" font-size="8.2" fill="#222"><tspan fill="#777">-</tspan>organisation</text>
<text x="593" y="683.5" font-size="8.2" fill="#222"><tspan fill="#777">-</tspan>label</text>
<text x="593" y="694.7" font-size="8.2" fill="#222"><tspan fill="#777">-</tspan>description</text>
<text x="593" y="705.9" font-size="8.2" fill="#222"><tspan fill="#777">-</tspan>start</text>
<text x="593" y="717.1" font-size="8.2" fill="#222"><tspan fill="#777">-</tspan>end</text>
<text x="593" y="728.3" font-size="8.2" fill="#222"><tspan fill="#777">-</tspan>link</text>
<text x="593" y="739.5" font-size="8.2" fill="#222"><tspan fill="#777">-</tspan>file</text>
<text x="593" y="750.7" font-size="8.2" fill="#222"><tspan fill="#777">-</tspan>guide : Guide</text>
<rect x="766.5" y="234.5" width="99" height="107" fill="#00ff00" stroke="#0b3a0b"/>
<line x1="766" y1="245.5" x2="866" y2="245.5" stroke="#0b3a0b"/>
<text x="816.0" y="242.7" font-size="8" font-weight="bold" text-anchor="middle" fill="#111">Reservation</text>
<text x="769" y="256.1" font-size="8.2" fill="#222"><tspan fill="#777">-</tspan>id</text>
<text x="769" y="267.3" font-size="8.2" fill="#222"><tspan fill="#777">-</tspan>date</text>
<text x="769" y="278.5" font-size="8.2" fill="#222"><tspan fill="#777">-</tspan>start</text>
<text x="769" y="289.7" font-size="8.2" fill="#222"><tspan fill="#777">-</tspan>end</text>
<text x="769" y="300.9" font-size="8.2" fill="#222"><tspan fill="#777">-</tspan>status</text>
<text x="769" y="312.1" font-size="8.2" fill="#222"><tspan fill="#777">-</tspan>amount</text>
<text x="769" y="323.3" font-size="8.2" fill="#222"><tspan fill="#777">-</tspan>caution</text>
<text x="769" y="334.5" font-size="8.2" fill="#222"><tspan fill="#777">-</tspan>payment_method</text>
<rect x="904.5" y="236.5" width="100" height="105" fill="#00ff00" stroke="#0b3a0b"/>
<line x1="904" y1="248.5" x2="1005" y2="248.5" stroke="#0b3a0b"/>
<text x="954.5" y="245.2" font-size="8" font-weight="bold" text-anchor="middle" fill="#111">Service</text>
<text x="907" y="259.1" font-size="8.2" fill="#222"><tspan fill="#777">-</tspan>id</text>
<text x="907" y="270.3" font-size="8.2" fill="#222"><tspan fill="#777">-</tspan>title</text>
<text x="907" y="281.5" font-size="8.2" fill="#222"><tspan fill="#777">-</tspan>description</text>
<text x="907" y="292.7" font-size="8.2" fill="#222"><tspan fill="#777">-</tspan>price_range</text>
<text x="907" y="303.9" font-size="8.2" fill="#222"><tspan fill="#777">-</tspan>inclusions : String[]</text>
<text x="907" y="315.1" font-size="8.2" fill="#222"><tspan fill="#777">-</tspan>exclusions : String[]</text>
<text x="907" y="326.3" font-size="8.2" fill="#222"><tspan fill="#777">-</tspan>medias : Media[]</text>
<text x="907" y="337.5" font-size="8.2" fill="#222"><tspan fill="#777">-</tspan>slug</text>
<rect x="1051.5" y="238.5" width="103" height="162" fill="#fff" stroke="#111"/>
<line x1="1051" y1="250.5" x2="1155" y2="250.5" stroke="#111"/>
<text x="1103.0" y="247.2" font-size="8" font-weight="bold" text-anchor="middle" fill="#111">Event</text>
<text x="1054" y="261.1" font-size="8.2" fill="#222"><tspan fill="#777">-</tspan>id</text>
<text x="1054" y="272.3" font-size="8.2" fill="#222"><tspan fill="#777">-</tspan>title</text>
<text x="1054" y="283.5" font-size="8.2" fill="#222"><tspan fill="#777">-</tspan>description</text>
<text x="1054" y="294.7" font-size="8.2" fill="#222"><tspan fill="#777">-</tspan>content</text>
<text x="1054" y="305.9" font-size="8.2" fill="#222"><tspan fill="#777">-</tspan>start</text>
<text x="1054" y="317.1" font-size="8.2" fill="#222"><tspan fill="#777">-</tspan>end</text>
<text x="1054" y="328.3" font-size="8.2" fill="#222"><tspan fill="#777">-</tspan>destination : Destination</text>
<text x="1054" y="339.5" font-size="8.2" fill="#222"><tspan fill="#777">-</tspan>sites : Site[]</text>
<text x="1054" y="350.7" font-size="8.2" fill="#222"><tspan fill="#777">-</tspan>views : int</text>
<text x="1054" y="361.9" font-size="8.2" fill="#222"><tspan fill="#777">-</tspan>reactions : Reaction[]</text>
<text x="1054" y="373.1" font-size="8.2" fill="#222"><tspan fill="#777">-</tspan>author : User</text>
<text x="1054" y="384.3" font-size="8.2" fill="#222"><tspan fill="#777">-</tspan>comments : Comment[]</text>
<text x="1054" y="395.5" font-size="8.2" fill="#222"><tspan fill="#777">-</tspan>slug</text>
<rect x="766.5" y="421.5" width="99" height="139" fill="#00ff00" stroke="#0b3a0b"/>
<line x1="766" y1="433.5" x2="866" y2="433.5" stroke="#0b3a0b"/>
<text x="816.0" y="430.2" font-size="8" font-weight="bold" text-anchor="middle" fill="#111">Journal</text>
<text x="769" y="444.1" font-size="8.2" fill="#222"><tspan fill="#777">-</tspan>id</text>
<text x="769" y="455.3" font-size="8.2" fill="#222"><tspan fill="#777">-</tspan>title</text>
<text x="769" y="466.5" font-size="8.2" fill="#222"><tspan fill="#777">-</tspan>description</text>
<text x="769" y="477.7" font-size="8.2" fill="#222"><tspan fill="#777">-</tspan>content</text>
<text x="769" y="488.9" font-size="8.2" fill="#222"><tspan fill="#777">-</tspan>destination : Destination</text>
<text x="769" y="500.1" font-size="8.2" fill="#222"><tspan fill="#777">-</tspan>sites : Site[]</text>
<text x="769" y="511.3" font-size="8.2" fill="#222"><tspan fill="#777">-</tspan>views : int</text>
<text x="769" y="522.5" font-size="8.2" fill="#222"><tspan fill="#777">-</tspan>reactions : Reaction[]</text>
<text x="769" y="533.7" font-size="8.2" fill="#222"><tspan fill="#777">-</tspan>comments : Comment[]</text>
<text x="769" y="544.9" font-size="8.2" fill="#222"><tspan fill="#777">-</tspan>author : User</text>
<text x="769" y="556.1" font-size="8.2" fill="#222"><tspan fill="#777">-</tspan>slug</text>
<rect x="900.5" y="455.5" width="100" height="95" fill="#00ff00" stroke="#0b3a0b"/>
<line x1="900" y1="466.5" x2="1001" y2="466.5" stroke="#0b3a0b"/>
<text x="950.5" y="463.7" font-size="8" font-weight="bold" text-anchor="middle" fill="#111">Review</text>
<text x="903" y="477.1" font-size="8.2" fill="#222"><tspan fill="#777">-</tspan>id</text>
<text x="903" y="488.3" font-size="8.2" fill="#222"><tspan fill="#777">-</tspan>note</text>
<text x="903" y="499.5" font-size="8.2" fill="#222"><tspan fill="#777">-</tspan>comment</text>
<text x="903" y="510.7" font-size="8.2" fill="#222"><tspan fill="#777">-</tspan>date</text>
<text x="903" y="521.9" font-size="8.2" fill="#222"><tspan fill="#777">-</tspan>is_accepted</text>
<text x="903" y="533.1" font-size="8.2" fill="#222"><tspan fill="#777">-</tspan>reactions : Reaction[]</text>
<text x="903" y="544.3" font-size="8.2" fill="#222"><tspan fill="#777">-</tspan>author : User</text>
<rect x="1030.5" y="466.5" width="114" height="84" fill="#00ff00" stroke="#0b3a0b"/>
<line x1="1030" y1="478.5" x2="1145" y2="478.5" stroke="#0b3a0b"/>
<text x="1087.5" y="475.2" font-size="8" font-weight="bold" text-anchor="middle" fill="#111">Package</text>
<text x="1033" y="489.1" font-size="8.2" fill="#222"><tspan fill="#777">-</tspan>id</text>
<text x="1033" y="500.3" font-size="8.2" fill="#222"><tspan fill="#777">-</tspan>title</text>
<text x="1033" y="511.5" font-size="8.2" fill="#222"><tspan fill="#777">-</tspan>description</text>
<text x="1033" y="522.7" font-size="8.2" fill="#222"><tspan fill="#777">-</tspan>start</text>
<text x="1033" y="533.9" font-size="8.2" fill="#222"><tspan fill="#777">-</tspan>end</text>
<rect x="1202.5" y="236.5" width="97" height="161" fill="#00ff00" stroke="#0b3a0b"/>
<line x1="1202" y1="248.5" x2="1300" y2="248.5" stroke="#0b3a0b"/>
<text x="1251.0" y="245.2" font-size="8" font-weight="bold" text-anchor="middle" fill="#111">Blog</text>
<text x="1205" y="259.1" font-size="8.2" fill="#222"><tspan fill="#777">-</tspan>id</text>
<text x="1205" y="270.3" font-size="8.2" fill="#222"><tspan fill="#777">-</tspan>title</text>
<text x="1205" y="281.5" font-size="8.2" fill="#222"><tspan fill="#777">-</tspan>content</text>
<text x="1205" y="292.7" font-size="8.2" fill="#222"><tspan fill="#777">-</tspan>pub_date</text>
<text x="1205" y="303.9" font-size="8.2" fill="#222"><tspan fill="#777">-</tspan>status</text>
<text x="1205" y="315.1" font-size="8.2" fill="#222"><tspan fill="#777">-</tspan>medias</text>
<text x="1205" y="326.3" font-size="8.2" fill="#222"><tspan fill="#777">-</tspan>keywords</text>
<text x="1205" y="337.5" font-size="8.2" fill="#222"><tspan fill="#777">-</tspan>source</text>
<text x="1205" y="348.7" font-size="8.2" fill="#222"><tspan fill="#777">-</tspan>comments : Comment[]</text>
<text x="1205" y="359.9" font-size="8.2" fill="#222"><tspan fill="#777">-</tspan>views : int</text>
<text x="1205" y="371.1" font-size="8.2" fill="#222"><tspan fill="#777">-</tspan>reactions : Reaction[]</text>
<text x="1205" y="382.3" font-size="8.2" fill="#222"><tspan fill="#777">-</tspan>author : User</text>
<text x="1205" y="393.5" font-size="8.2" fill="#222"><tspan fill="#777">-</tspan>slug</text>
<rect x="1202.5" y="444.5" width="97" height="106" fill="#00ff00" stroke="#0b3a0b"/>
<line x1="1202" y1="455.5" x2="1300" y2="455.5" stroke="#0b3a0b"/>
<text x="1251.0" y="452.7" font-size="8" font-weight="bold" text-anchor="middle" fill="#111">Media</text>
<text x="1205" y="466.1" font-size="8.2" fill="#222"><tspan fill="#777">-</tspan>id</text>
<text x="1205" y="477.3" font-size="8.2" fill="#222"><tspan fill="#777">-</tspan>url</text>
<text x="1205" y="488.5" font-size="8.2" fill="#222"><tspan fill="#777">-</tspan>type</text>
<text x="1205" y="499.7" font-size="8.2" fill="#222"><tspan fill="#777">-</tspan>alt</text>
<text x="1205" y="510.9" font-size="8.2" fill="#222"><tspan fill="#777">-</tspan>description</text>
<text x="1205" y="522.1" font-size="8.2" fill="#222"><tspan fill="#777">-</tspan>reactions : Reaction[]</text>
<text x="1205" y="533.3" font-size="8.2" fill="#222"><tspan fill="#777">-</tspan>views : int</text>
<text x="1205" y="544.5" font-size="8.2" fill="#222"><tspan fill="#777">-</tspan>comments : Comment[]</text>
<rect x="1380.5" y="234.5" width="96" height="84" fill="#00ff00" stroke="#0b3a0b"/>
<line x1="1380" y1="245.5" x2="1477" y2="245.5" stroke="#0b3a0b"/>
<text x="1428.5" y="242.7" font-size="8" font-weight="bold" text-anchor="middle" fill="#111">Localization</text>
<text x="1383" y="256.1" font-size="8.2" fill="#222"><tspan fill="#777">-</tspan>id</text>
<text x="1383" y="267.3" font-size="8.2" fill="#222"><tspan fill="#777">-</tspan>zip_code</text>
<text x="1383" y="278.5" font-size="8.2" fill="#222"><tspan fill="#777">-</tspan>country : Country</text>
<text x="1383" y="289.7" font-size="8.2" fill="#222"><tspan fill="#777">-</tspan>region</text>
<text x="1383" y="300.9" font-size="8.2" fill="#222"><tspan fill="#777">-</tspan>province</text>
<text x="1383" y="312.1" font-size="8.2" fill="#222"><tspan fill="#777">-</tspan>country_id</text>
<rect x="1500.5" y="234.5" width="102" height="162" fill="#00ff00" stroke="#0b3a0b"/>
<line x1="1500" y1="246.5" x2="1603" y2="246.5" stroke="#0b3a0b"/>
<text x="1551.5" y="243.2" font-size="8" font-weight="bold" text-anchor="middle" fill="#111">Site</text>
<text x="1503" y="257.1" font-size="8.2" fill="#222"><tspan fill="#777">-</tspan>id</text>
<text x="1503" y="268.3" font-size="8.2" fill="#222"><tspan fill="#777">-</tspan>name</text>
<text x="1503" y="279.5" font-size="8.2" fill="#222"><tspan fill="#777">-</tspan>description</text>
<text x="1503" y="290.7" font-size="8.2" fill="#222"><tspan fill="#777">-</tspan>medias</text>
<text x="1503" y="301.9" font-size="8.2" fill="#222"><tspan fill="#777">-</tspan>geocode : GeoCode</text>
<text x="1503" y="313.1" font-size="8.2" fill="#222"><tspan fill="#777">-</tspan>destination : Destination</text>
<text x="1503" y="324.3" font-size="8.2" fill="#222"><tspan fill="#777">-</tspan>views : int</text>
<text x="1503" y="335.5" font-size="8.2" fill="#222"><tspan fill="#777">-</tspan>reactions : Reaction[]</text>
<text x="1503" y="346.7" font-size="8.2" fill="#222"><tspan fill="#777">-</tspan>comments : Comment[]</text>
<text x="1503" y="357.9" font-size="8.2" fill="#222"><tspan fill="#777">-</tspan>author : User</text>
<text x="1503" y="369.1" font-size="8.2" fill="#222"><tspan fill="#777">-</tspan>destination_id</text>
<text x="1503" y="380.3" font-size="8.2" fill="#222"><tspan fill="#777">-</tspan>slug</text>
<rect x="1626.5" y="234.5" width="102" height="163" fill="#00ff00" stroke="#0b3a0b"/>
<line x1="1626" y1="246.5" x2="1729" y2="246.5" stroke="#0b3a0b"/>
<text x="1677.5" y="243.2" font-size="8" font-weight="bold" text-anchor="middle" fill="#111">Destination</text>
<text x="1629" y="257.1" font-size="8.2" fill="#222"><tspan fill="#777">-</tspan>id</text>
<text x="1629" y="268.3" font-size="8.2" fill="#222"><tspan fill="#777">-</tspan>name</text>
<text x="1629" y="279.5" font-size="8.2" fill="#222"><tspan fill="#777">-</tspan>description</text>
<text x="1629" y="290.7" font-size="8.2" fill="#222"><tspan fill="#777">-</tspan>localization : Localization</text>
<text x="1629" y="301.9" font-size="8.2" fill="#222"><tspan fill="#777">-</tspan>type</text>
<text x="1629" y="313.1" font-size="8.2" fill="#222"><tspan fill="#777">-</tspan>medias</text>
<text x="1629" y="324.3" font-size="8.2" fill="#222"><tspan fill="#777">-</tspan>views : int</text>
<text x="1629" y="335.5" font-size="8.2" fill="#222"><tspan fill="#777">-</tspan>reactions : Reaction[]</text>
<text x="1629" y="346.7" font-size="8.2" fill="#222"><tspan fill="#777">-</tspan>comments : Comment[]</text>
<text x="1629" y="357.9" font-size="8.2" fill="#222"><tspan fill="#777">-</tspan>author : User</text>
<text x="1629" y="369.1" font-size="8.2" fill="#222"><tspan fill="#777">-</tspan>geocode : GeoCode</text>
<text x="1629" y="380.3" font-size="8.2" fill="#222"><tspan fill="#777">-</tspan>content_id</text>
<text x="1629" y="391.5" font-size="8.2" fill="#222"><tspan fill="#777">-</tspan>slug</text>
<rect x="1769.5" y="234.5" width="101" height="65" fill="#00ff00" stroke="#0b3a0b"/>
<line x1="1769" y1="245.5" x2="1871" y2="245.5" stroke="#0b3a0b"/>
<text x="1820.0" y="242.7" font-size="8" font-weight="bold" text-anchor="middle" fill="#111">Visit</text>
<text x="1772" y="256.1" font-size="8.2" fill="#222"><tspan fill="#777">-</tspan>id</text>
<text x="1772" y="267.3" font-size="8.2" fill="#222"><tspan fill="#777">-</tspan>visite_date</text>
<text x="1772" y="278.5" font-size="8.2" fill="#222"><tspan fill="#777">-</tspan>media_id</text>
<text x="1772" y="289.7" font-size="8.2" fill="#222"><tspan fill="#777">-</tspan>description</text>
<rect x="1380.5" y="483.5" width="94" height="59" fill="#00ff00" stroke="#0b3a0b"/>
<line x1="1380" y1="494.5" x2="1475" y2="494.5" stroke="#0b3a0b"/>
<text x="1427.5" y="491.7" font-size="8" font-weight="bold" text-anchor="middle" fill="#111">Country</text>
<text x="1383" y="505.1" font-size="8.2" fill="#222"><tspan fill="#777">-</tspan>id</text>
<text x="1383" y="516.3" font-size="8.2" fill="#222"><tspan fill="#777">-</tspan>name</text>
<text x="1383" y="527.5" font-size="8.2" fill="#222"><tspan fill="#777">-</tspan>flag</text>
<rect x="1512.5" y="483.5" width="96" height="57" fill="#00ff00" stroke="#0b3a0b"/>
<line x1="1512" y1="494.5" x2="1609" y2="494.5" stroke="#0b3a0b"/>
<text x="1560.5" y="491.7" font-size="8" font-weight="bold" text-anchor="middle" fill="#111">GeoCode</text>
<text x="1515" y="505.1" font-size="8.2" fill="#222"><tspan fill="#777">-</tspan>id</text>
<text x="1515" y="516.3" font-size="8.2" fill="#222"><tspan fill="#777">-</tspan>longitude</text>
<text x="1515" y="527.5" font-size="8.2" fill="#222"><tspan fill="#777">-</tspan>latitude</text>
<rect x="735.5" y="639.5" width="155" height="109" fill="#00ff00" stroke="#0b3a0b"/>
<line x1="735" y1="651.5" x2="891" y2="651.5" stroke="#0b3a0b"/>
<text x="813.0" y="648.2" font-size="8" font-weight="bold" text-anchor="middle" fill="#111">Message</text>
<text x="738" y="662.1" font-size="8.2" fill="#222"><tspan fill="#777">-</tspan>id</text>
<text x="738" y="673.3" font-size="8.2" fill="#222"><tspan fill="#777">-</tspan>content</text>
<text x="738" y="684.5" font-size="8.2" fill="#222"><tspan fill="#777">-</tspan>sent_at</text>
<text x="738" y="695.7" font-size="8.2" fill="#222"><tspan fill="#777">-</tspan>exp : User</text>
<text x="738" y="706.9" font-size="8.2" fill="#222"><tspan fill="#777">-</tspan>dest : User</text>
<text x="738" y="718.1" font-size="8.2" fill="#222"><tspan fill="#777">-</tspan>is_read</text>
<text x="738" y="729.3" font-size="8.2" fill="#222"><tspan fill="#777">-</tspan>type [message,contact,report]</text>
<rect x="932.5" y="625.5" width="140" height="80" fill="#00ff00" stroke="#0b3a0b"/>
<line x1="932" y1="636.5" x2="1073" y2="636.5" stroke="#0b3a0b"/>
<text x="1002.5" y="633.7" font-size="8" font-weight="bold" text-anchor="middle" fill="#111">Content</text>
<text x="935" y="647.1" font-size="8.2" fill="#222"><tspan fill="#777">-</tspan>id</text>
<text x="935" y="658.3" font-size="8.2" fill="#222"><tspan fill="#777">-</tspan>paragraphs : Paragraph[]</text>
<text x="935" y="669.5" font-size="8.2" fill="#222"><tspan fill="#777">-</tspan>image</text>
<rect x="940.5" y="748.5" width="140" height="106" fill="#00ff00" stroke="#0b3a0b"/>
<line x1="940" y1="759.5" x2="1081" y2="759.5" stroke="#0b3a0b"/>
<text x="1010.5" y="756.7" font-size="8" font-weight="bold" text-anchor="middle" fill="#111">Paragraph</text>
<text x="943" y="770.1" font-size="8.2" fill="#222"><tspan fill="#777">-</tspan>id</text>
<text x="943" y="781.3" font-size="8.2" fill="#222"><tspan fill="#777">-</tspan>title</text>
<text x="943" y="792.5" font-size="8.2" fill="#222"><tspan fill="#777">-</tspan>content</text>
<text x="943" y="803.7" font-size="8.2" fill="#222"><tspan fill="#777">-</tspan>image</text>
<text x="943" y="814.9" font-size="8.2" fill="#222"><tspan fill="#777">-</tspan>img_alt</text>
<text x="943" y="826.1" font-size="8.2" fill="#222"><tspan fill="#777">-</tspan>img_classes</text>
<text x="943" y="837.3" font-size="8.2" fill="#222"><tspan fill="#777">-</tspan>img_position</text>
<text x="943" y="848.5" font-size="8.2" fill="#222"><tspan fill="#777">-</tspan>content_id</text>
<rect x="1177.5" y="646.5" width="111" height="83" fill="#00ff00" stroke="#0b3a0b"/>
<line x1="1177" y1="657.5" x2="1289" y2="657.5" stroke="#0b3a0b"/>
<text x="1233.0" y="654.7" font-size="8" font-weight="bold" text-anchor="middle" fill="#111">Comment</text>
<text x="1180" y="668.1" font-size="8.2" fill="#222"><tspan fill="#777">-</tspan>id</text>
<text x="1180" y="679.3" font-size="8.2" fill="#222"><tspan fill="#777">-</tspan>user : User</text>
<text x="1180" y="690.5" font-size="8.2" fill="#222"><tspan fill="#777">-</tspan>target : morph</text>
<text x="1180" y="701.7" font-size="8.2" fill="#222"><tspan fill="#777">-</tspan>content</text>
<text x="1180" y="712.9" font-size="8.2" fill="#222"><tspan fill="#777">-</tspan>reactions : Reaction</text>
<text x="1180" y="724.1" font-size="8.2" fill="#222"><tspan fill="#777">-</tspan>image</text>
<rect x="1441.5" y="770.5" width="102" height="62" fill="#00ff00" stroke="#0b3a0b"/>
<line x1="1441" y1="781.5" x2="1544" y2="781.5" stroke="#0b3a0b"/>
<text x="1492.5" y="778.7" font-size="8" font-weight="bold" text-anchor="middle" fill="#111">Reaction</text>
<text x="1444" y="792.1" font-size="8.2" fill="#222"><tspan fill="#777">-</tspan>id</text>
<text x="1444" y="803.3" font-size="8.2" fill="#222"><tspan fill="#777">-</tspan>user : User</text>
<text x="1444" y="814.5" font-size="8.2" fill="#222"><tspan fill="#777">-</tspan>emoticon</text>
<text x="1444" y="825.7" font-size="8.2" fill="#222"><tspan fill="#777">-</tspan>date</text>
<polygon points="450.5,236.5 455.5,228.5 450.5,220.5 445.5,228.5" fill="#fff" stroke="#111"/>
<polygon points="458.5,236.5 463.5,228.5 458.5,220.5 453.5,228.5" fill="#fff" stroke="#111"/>
<polygon points="480.5,236.5 485.5,228.5 480.5,220.5 475.5,228.5" fill="#000" stroke="#111"/>
<polygon points="389.5,267.5 380.5,262.5 380.5,272.5" fill="#fff" stroke="#111"/>
<polygon points="510.5,267.5 519.5,262.5 519.5,272.5" fill="#fff" stroke="#111"/>
<path d="M679.5 262.5L670.5 267.5L679.5 272.5" fill="none" stroke="#111"/>
<polygon points="511.5,319.5 519.5,314.5 527.5,319.5 519.5,324.5" fill="#fff" stroke="#111"/>
<polygon points="398.5,342.5 403.5,351.5 393.5,351.5" fill="#fff" stroke="#111"/>
<polygon points="409.5,342.5 414.5,351.5 404.5,351.5" fill="#fff" stroke="#111"/>
<polygon points="438.5,342.5 443.5,351.5 433.5,351.5" fill="#fff" stroke="#111"/>
<polygon points="449.5,342.5 454.5,350.5 449.5,358.5 444.5,350.5" fill="#000" stroke="#111"/>
<polygon points="459.5,342.5 464.5,351.5 454.5,351.5" fill="#fff" stroke="#111"/>
<polygon points="651.5,399.5 656.5,391.5 651.5,383.5 646.5,391.5" fill="#000" stroke="#111"/>
<path d="M520.5 495.5L511.5 500.5L520.5 505.5" fill="none" stroke="#111"/>
<polygon points="511.5,519.5 519.5,514.5 527.5,519.5 519.5,524.5" fill="#000" stroke="#111"/>
<polygon points="396.5,529.5 401.5,537.5 396.5,545.5 391.5,537.5" fill="#000" stroke="#111"/>
<polygon points="427.5,529.5 432.5,537.5 427.5,545.5 422.5,537.5" fill="#fff" stroke="#111"/>
<polygon points="990.5,625.5 995.5,617.5 990.5,609.5 985.5,617.5" fill="#000" stroke="#111"/>
<polygon points="474.5,529.5 479.5,537.5 474.5,545.5 469.5,537.5" fill="#000" stroke="#111"/>
<path d="M1672.5 225.5L1677.5 234.5L1682.5 225.5" fill="none" stroke="#111"/>
<polygon points="959.5,342.5 964.5,350.5 959.5,358.5 954.5,350.5" fill="#fff" stroke="#111"/>
<polygon points="1095.5,401.5 1100.5,409.5 1095.5,417.5 1090.5,409.5" fill="#000" stroke="#111"/>
<polygon points="1106.5,401.5 1111.5,409.5 1106.5,417.5 1101.5,409.5" fill="#000" stroke="#111"/>
<polygon points="1123.5,401.5 1128.5,409.5 1123.5,417.5 1118.5,409.5" fill="#000" stroke="#111"/>
<polygon points="798.5,561.5 803.5,569.5 798.5,577.5 793.5,569.5" fill="#000" stroke="#111"/>
<polygon points="812.5,561.5 817.5,569.5 812.5,577.5 807.5,569.5" fill="#000" stroke="#111"/>
<polygon points="826.5,561.5 831.5,569.5 826.5,577.5 821.5,569.5" fill="#000" stroke="#111"/>
<polygon points="1300.5,304.5 1308.5,299.5 1316.5,304.5 1308.5,309.5" fill="#000" stroke="#111"/>
<polygon points="1300.5,339.5 1308.5,334.5 1316.5,339.5 1308.5,344.5" fill="#000" stroke="#111"/>
<polygon points="1266.5,398.5 1271.5,406.5 1266.5,414.5 1261.5,406.5" fill="#000" stroke="#111"/>
<polygon points="1300.5,531.5 1308.5,526.5 1316.5,531.5 1308.5,536.5" fill="#000" stroke="#111"/>
<polygon points="1828.5,300.5 1833.5,308.5 1828.5,316.5 1823.5,308.5" fill="#000" stroke="#111"/>
<polygon points="1654.5,397.5 1659.5,405.5 1654.5,413.5 1649.5,405.5" fill="#000" stroke="#111"/>
<polygon points="1530.5,396.5 1535.5,404.5 1530.5,412.5 1525.5,404.5" fill="#000" stroke="#111"/>
<polygon points="1555.5,396.5 1560.5,404.5 1555.5,412.5 1550.5,404.5" fill="#000" stroke="#111"/>
<polygon points="1569.5,396.5 1574.5,404.5 1569.5,412.5 1564.5,404.5" fill="#000" stroke="#111"/>
<polygon points="1585.5,396.5 1590.5,404.5 1585.5,412.5 1580.5,404.5" fill="#000" stroke="#111"/>
<polygon points="932.5,652.5 924.5,647.5 916.5,652.5 924.5,657.5" fill="#000" stroke="#111"/>
<polygon points="1640.5,397.5 1645.5,405.5 1640.5,413.5 1635.5,405.5" fill="#000" stroke="#111"/>
<polygon points="1694.5,397.5 1699.5,405.5 1694.5,413.5 1689.5,405.5" fill="#000" stroke="#111"/>
<polygon points="1708.5,397.5 1713.5,405.5 1708.5,413.5 1703.5,405.5" fill="#000" stroke="#111"/>
<polygon points="932.5,665.5 924.5,660.5 916.5,665.5 924.5,670.5" fill="#000" stroke="#111"/>
<polygon points="1626.5,284.5 1618.5,279.5 1610.5,284.5 1618.5,289.5" fill="#fff" stroke="#111"/>
<polygon points="1575.5,234.5 1580.5,226.5 1575.5,218.5 1570.5,226.5" fill="#000" stroke="#111"/>
<polygon points="1714.5,234.5 1719.5,226.5 1714.5,218.5 1709.5,226.5" fill="#000" stroke="#111"/>
<polygon points="1012.5,706.5 1017.5,714.5 1012.5,722.5 1007.5,714.5" fill="#000" stroke="#111"/>
<polygon points="1289.5,697.5 1297.5,692.5 1305.5,697.5 1297.5,702.5" fill="#000" stroke="#111"/>
<rect x="1429.5" y="431.5" width="41" height="20" fill="#c6daf0" stroke="#8aaed8"/>
<text x="1450" y="447.2" font-size="14.5" text-anchor="middle" fill="#4a5260">Main</text>
<rect x="1738" y="207" width="6" height="6" fill="#fff"/><circle cx="1738.8" cy="209.8" r="2.6" fill="none" stroke="#111" stroke-width="1.1"/><path d="M1740.7 211.7L1743 214" stroke="#111" stroke-width="1.3"/>
<rect x="1750.5" y="182.5" width="17" height="17" fill="#fafafa" stroke="#d0d0d8"/><path d="M1753.5 186.5H1756V191.5H1759V196H1763" fill="none" stroke="#7a7ad0" stroke-width="0.9"/><rect x="1753" y="185" width="3" height="3" fill="none" stroke="#7a7ad0" stroke-width="0.8"/><rect x="1761.5" y="194.5" width="3" height="3" fill="none" stroke="#7a7ad0" stroke-width="0.8"/>
<rect x="1356.5" y="578.5" width="11" height="11" fill="#fafafa" stroke="#d8d8d8"/><path d="M1359 587L1365 581M1361.5 580.8H1365.3V584.6" fill="none" stroke="#111" stroke-width="1.4"/>
<circle cx="1726.3" cy="584.4" r="5.2" fill="#e8e8e8" stroke="#8a8a8a" stroke-width="0.8"/><rect x="1723.3" y="581.4" width="6" height="6" fill="#5ab85a" stroke="#2a6a2a" stroke-width="0.6"/>
<rect x="1733.5" y="578.5" width="10" height="10" fill="#fafafa"/><path d="M1735.5 580V586H1739" fill="none" stroke="#111" stroke-width="1.2"/><path d="M1739 584L1742 586.5L1739 589Z" fill="#111"/><rect x="1740" y="585" width="3" height="3" fill="#111"/>
</svg>
</body></html>
